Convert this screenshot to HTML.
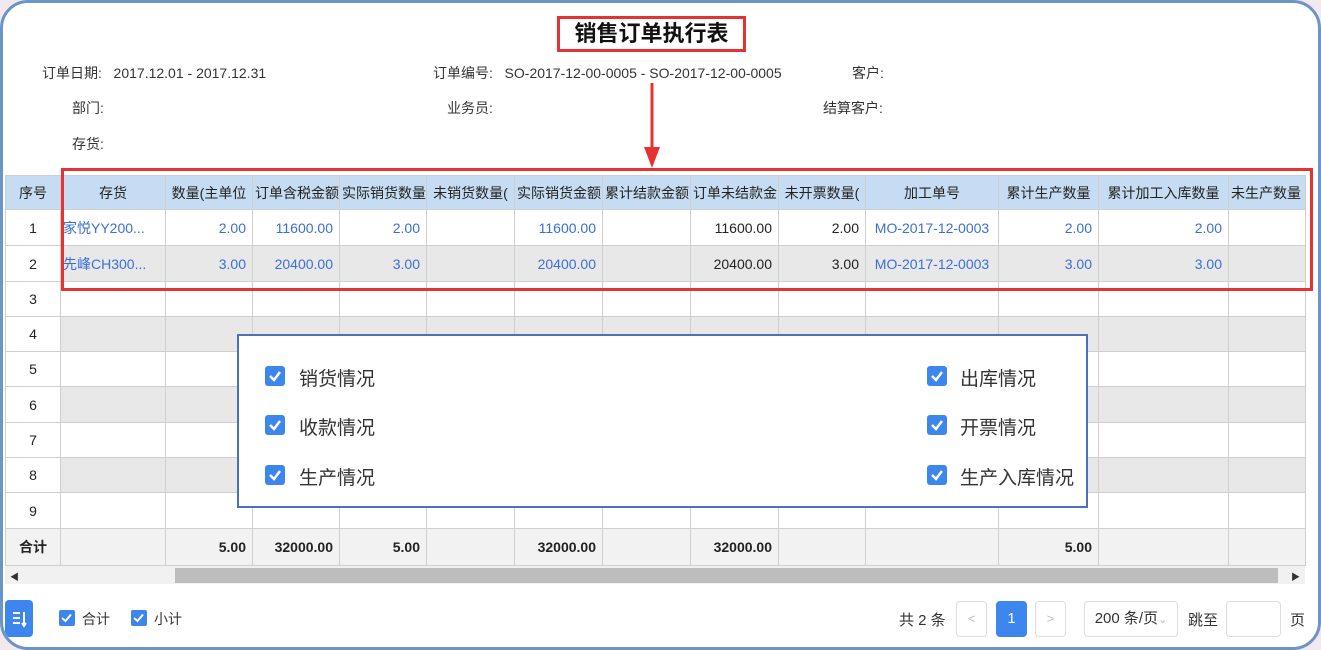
<!DOCTYPE html>
<html><head><meta charset="utf-8">
<style>
*{box-sizing:border-box;margin:0;padding:0}
html,body{width:1321px;height:650px;overflow:hidden;background:#f2e8ee}
body{font-family:"Liberation Sans","Noto Sans CJK SC",sans-serif;font-size:14px;color:#222;position:relative}
.frame{position:absolute;left:0;top:0;width:1321px;height:650px;border:3px solid #6b95c9;border-radius:28px;background:#fff;overflow:hidden}
.abs{position:absolute}
.lbl{position:absolute;font-size:14px;color:#333;white-space:nowrap}
table{position:absolute;left:2px;top:172px;border-collapse:collapse;table-layout:fixed;width:1300px}
td{border:1px solid #cfcfcf;font-size:14px;white-space:nowrap;overflow:hidden;padding:0 6px;text-align:right;color:#3a6fd8}
tr.h td{background:#c6dcf2;color:#222;text-align:center;height:34px;padding:0 2px;text-align:center}
td.n{text-align:center;color:#222;background:#fff}
tr.g td{background:#e8e8e8}
tr.g td.n{background:#fff}
td.l{text-align:left;padding-left:2px}
td.k{color:#222}
tr.t td{background:#f2f2f2;color:#222;font-weight:bold;height:37px}
.cb{position:absolute;width:20px;height:20px;background:#3d86ee;border-radius:3px}
.cb svg{position:absolute;left:3px;top:4px}
.cbs{position:absolute;width:16px;height:16px;background:#3d86ee;border-radius:2px}
.cbs svg{position:absolute;left:2px;top:3px}
.dlbl{position:absolute;font-size:19px;color:#333}
.pbtn{position:absolute;top:598px;height:36px;border:1px solid #ddd;border-radius:4px;background:#fff;text-align:center;line-height:34px;color:#bbb;font-size:13px}
</style></head><body>
<div class="frame">
<div class="abs" style="left:554px;top:13px;width:189px;height:36px;border:3px solid #e53333;text-align:center;font-weight:bold;font-size:22px;line-height:29px;color:#111">销售订单执行表</div>
<div class="lbl" style="left:39px;top:60px">订单日期:&nbsp;&nbsp; 2017.12.01 - 2017.12.31</div>
<div class="lbl" style="left:69px;top:95px">部门:</div>
<div class="lbl" style="left:69px;top:131px">存货:</div>
<div class="lbl" style="left:430px;top:60px">订单编号:&nbsp;&nbsp; SO-2017-12-00-0005 - SO-2017-12-00-0005</div>
<div class="lbl" style="left:444px;top:95px">业务员:</div>
<div class="lbl" style="left:849px;top:60px">客户:</div>
<div class="lbl" style="left:820px;top:95px">结算客户:</div>
<svg class="abs" style="left:638px;top:78px" width="24" height="90"><line x1="11" y1="2" x2="11" y2="70" stroke="#e53333" stroke-width="3"/><polygon points="3,66 19,66 11,87" fill="#e53333"/></svg>

<table>
<colgroup><col style="width:55px"><col style="width:105px"><col style="width:87px"><col style="width:87px"><col style="width:87px"><col style="width:88px"><col style="width:88px"><col style="width:88px"><col style="width:88px"><col style="width:87px"><col style="width:133px"><col style="width:100px"><col style="width:130px"><col style="width:77px"></colgroup>
<tr class="h"><td>序号</td><td>存货</td><td>数量(主单位</td><td>订单含税金额</td><td>实际销货数量</td><td>未销货数量(</td><td>实际销货金额</td><td>累计结款金额</td><td>订单未结款金</td><td>未开票数量(</td><td>加工单号</td><td>累计生产数量</td><td>累计加工入库数量</td><td style="text-align:left">未生产数量</td></tr>
<tr style="height:36px"><td class="n">1</td><td class="l">家悦YY200...</td><td>2.00</td><td>11600.00</td><td>2.00</td><td></td><td>11600.00</td><td></td><td class="k">11600.00</td><td class="k">2.00</td><td style="text-align:center">MO-2017-12-0003</td><td>2.00</td><td>2.00</td><td></td></tr>
<tr class="g" style="height:36px"><td class="n">2</td><td class="l">先峰CH300...</td><td>3.00</td><td>20400.00</td><td>3.00</td><td></td><td>20400.00</td><td></td><td class="k">20400.00</td><td class="k">3.00</td><td style="text-align:center">MO-2017-12-0003</td><td>3.00</td><td>3.00</td><td></td></tr>
<tr style="height:35px"><td class="n">3</td><td></td><td></td><td></td><td></td><td></td><td></td><td></td><td></td><td></td><td></td><td></td><td></td><td></td></tr>
<tr class="g" style="height:35px"><td class="n">4</td><td></td><td></td><td></td><td></td><td></td><td></td><td></td><td></td><td></td><td></td><td></td><td></td><td></td></tr>
<tr style="height:35px"><td class="n">5</td><td></td><td></td><td></td><td></td><td></td><td></td><td></td><td></td><td></td><td></td><td></td><td></td><td></td></tr>
<tr class="g" style="height:36px"><td class="n">6</td><td></td><td></td><td></td><td></td><td></td><td></td><td></td><td></td><td></td><td></td><td></td><td></td><td></td></tr>
<tr style="height:35px"><td class="n">7</td><td></td><td></td><td></td><td></td><td></td><td></td><td></td><td></td><td></td><td></td><td></td><td></td><td></td></tr>
<tr class="g" style="height:35px"><td class="n">8</td><td></td><td></td><td></td><td></td><td></td><td></td><td></td><td></td><td></td><td></td><td></td><td></td><td></td></tr>
<tr style="height:36px"><td class="n">9</td><td></td><td></td><td></td><td></td><td></td><td></td><td></td><td></td><td></td><td></td><td></td><td></td><td></td></tr>
<tr class="t"><td style="text-align:center">合计</td><td></td><td>5.00</td><td>32000.00</td><td>5.00</td><td></td><td>32000.00</td><td></td><td>32000.00</td><td></td><td></td><td>5.00</td><td></td><td></td></tr>
</table>

<div class="abs" style="left:58px;top:165px;width:1252px;height:123px;border:3px solid #e53333"></div>

<!-- scrollbar -->
<div class="abs" style="left:2px;top:563px;width:1300px;height:18px;background:#f1f1f1"></div>
<div class="abs" style="left:172px;top:565px;width:1103px;height:15px;background:#bdbdbd"></div>
<div class="abs" style="left:7px;top:567px;font-size:9px;color:#333">◀</div>
<div class="abs" style="left:1288px;top:567px;font-size:9px;color:#333">▶</div>

<!-- dialog -->
<div class="abs" style="left:234px;top:331px;width:851px;height:174px;border:2px solid #4a72b8;background:#fff"></div>
<div class="cb" style="left:262px;top:363px"><svg width="14" height="12"><path d="M2 6 L6 10 L12 2" stroke="#fff" stroke-width="2.5" fill="none"/></svg></div>
<div class="dlbl" style="left:296px;top:361px">销货情况</div>
<div class="cb" style="left:262px;top:412px"><svg width="14" height="12"><path d="M2 6 L6 10 L12 2" stroke="#fff" stroke-width="2.5" fill="none"/></svg></div>
<div class="dlbl" style="left:296px;top:410px">收款情况</div>
<div class="cb" style="left:262px;top:462px"><svg width="14" height="12"><path d="M2 6 L6 10 L12 2" stroke="#fff" stroke-width="2.5" fill="none"/></svg></div>
<div class="dlbl" style="left:296px;top:460px">生产情况</div>
<div class="cb" style="left:924px;top:363px"><svg width="14" height="12"><path d="M2 6 L6 10 L12 2" stroke="#fff" stroke-width="2.5" fill="none"/></svg></div>
<div class="dlbl" style="left:957px;top:361px">出库情况</div>
<div class="cb" style="left:924px;top:412px"><svg width="14" height="12"><path d="M2 6 L6 10 L12 2" stroke="#fff" stroke-width="2.5" fill="none"/></svg></div>
<div class="dlbl" style="left:957px;top:410px">开票情况</div>
<div class="cb" style="left:924px;top:462px"><svg width="14" height="12"><path d="M2 6 L6 10 L12 2" stroke="#fff" stroke-width="2.5" fill="none"/></svg></div>
<div class="dlbl" style="left:957px;top:460px">生产入库情况</div>

<!-- footer -->
<div class="abs" style="left:2px;top:597px;width:28px;height:37px;background:#3d86ee;border-radius:4px"><svg width="28" height="37"><path d="M8 13h7M8 18h7M8 23h7M19 12v14M17 23l2 3 2-3" stroke="#fff" stroke-width="2" fill="none"/></svg></div>
<div class="cbs" style="left:56px;top:607px"><svg width="12" height="10"><path d="M1 5 L4.5 8 L10 1.5" stroke="#fff" stroke-width="2" fill="none"/></svg></div>
<div class="lbl" style="left:79px;top:606px">合计</div>
<div class="cbs" style="left:128px;top:607px"><svg width="12" height="10"><path d="M1 5 L4.5 8 L10 1.5" stroke="#fff" stroke-width="2" fill="none"/></svg></div>
<div class="lbl" style="left:151px;top:606px">小计</div>

<div class="lbl" style="left:896px;top:606px;font-size:15px">共 2 条</div>
<div class="pbtn" style="left:953px;width:31px">&lt;</div>
<div class="pbtn" style="left:993px;width:31px;background:#3d86ee;border-color:#3d86ee;color:#fff;font-size:15px">1</div>
<div class="pbtn" style="left:1032px;width:31px">&gt;</div>
<div class="pbtn" style="left:1081px;width:94px;color:#333;font-size:15px">200 条/页<span style="color:#bbb;font-size:11px">⌄</span></div>
<div class="lbl" style="left:1185px;top:606px;font-size:15px">跳至</div>
<div class="pbtn" style="left:1223px;width:55px"></div>
<div class="lbl" style="left:1287px;top:606px;font-size:15px">页</div>
</div>
</body></html>
